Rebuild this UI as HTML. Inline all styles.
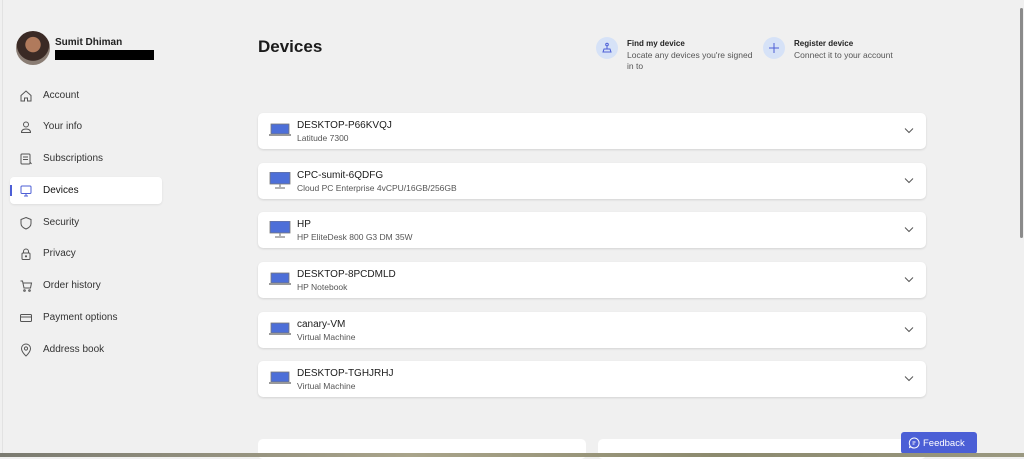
<!DOCTYPE html>
<html><head><meta charset="utf-8"><style>
*{margin:0;padding:0;box-sizing:border-box}
body{width:1024px;height:457px;overflow:hidden;background:#f0f0f0;font-family:"Liberation Sans",sans-serif;color:#1b1b1b;position:relative}
.abs{position:absolute}
.nav{position:absolute;left:0;width:170px;height:28px}
.nav svg{position:absolute;left:19px;top:7px}
.nav span{position:absolute;left:43px;top:8px;font-size:10px;color:#333}
.card{position:absolute;left:258px;width:668px;height:36px;background:#fff;border-radius:5px;box-shadow:0 1px 2px rgba(0,0,0,.12)}
.card .t{position:absolute;left:39px;top:7px;font-size:10px;color:#1b1b1b}
.card .s{position:absolute;left:39px;top:20px;font-size:8.5px;color:#555}
.card .ic{position:absolute;left:11px;top:9px}
.card .ch{position:absolute;right:12px;top:14px}
</style></head><body>
<div class="abs" style="left:2px;top:0;width:1px;height:457px;background:#e2e2e2"></div>
<div class="abs" style="left:16px;top:31px;width:34px;height:34px;border-radius:50%;background:radial-gradient(circle at 50% 40%,#b07a5c 0 28%,#3a2a25 30% 60%,#8a7d74 62%)"></div>
<div class="abs" style="left:55px;top:37px;font-size:10px;font-weight:bold;color:#222">Sumit Dhiman</div>
<div class="abs" style="left:55px;top:50px;width:99px;height:10px;background:#000"></div>

<div class="nav" style="top:82px"><svg width="14" height="14" viewBox="0 0 14 14" fill="none" stroke="#555" stroke-width="1"><path d="M2 6.5L7 2l5 4.5V12H8.5V9h-3v3H2z"/></svg><span>Account</span></div>
<div class="nav" style="top:113px"><svg width="14" height="14" viewBox="0 0 14 14" fill="none" stroke="#555"><circle cx="7" cy="4.5" r="2.5"/><path d="M2.5 12.5c0-2.5 2-3.5 4.5-3.5s4.5 1 4.5 3.5z"/></svg><span>Your info</span></div>
<div class="nav" style="top:145px"><svg width="14" height="14" viewBox="0 0 14 14" fill="none" stroke="#555"><rect x="2" y="2" width="9" height="10" rx="1"/><path d="M4 5h5M4 7.5h5M11 10l1.5 2"/></svg><span>Subscriptions</span></div>
<div class="abs" style="left:10px;top:177px;width:152px;height:27px;background:#fff;border-radius:4px;box-shadow:0 1px 2px rgba(0,0,0,.08)"></div>
<div class="abs" style="left:10px;top:185px;width:2px;height:11px;background:#4d5fd6"></div>
<div class="nav" style="top:177px"><svg width="14" height="14" viewBox="0 0 14 14" fill="none" stroke="#4d5fd6"><rect x="2" y="2" width="10" height="7.5" rx="1"/><path d="M5 12h4M7 9.5V12"/></svg><span style="color:#111">Devices</span></div>
<div class="nav" style="top:209px"><svg width="14" height="14" viewBox="0 0 14 14" fill="none" stroke="#555"><path d="M7 1.5l5 2v4c0 3-2.5 4.5-5 5.5-2.5-1-5-2.5-5-5.5v-4z"/></svg><span>Security</span></div>
<div class="nav" style="top:240px"><svg width="14" height="14" viewBox="0 0 14 14" fill="none" stroke="#555"><rect x="3" y="6" width="8" height="6.5" rx="1"/><path d="M4.5 6V4.5a2.5 2.5 0 015 0V6"/><circle cx="7" cy="9.3" r=".6" fill="#555"/></svg><span>Privacy</span></div>
<div class="nav" style="top:272px"><svg width="14" height="14" viewBox="0 0 14 14" fill="none" stroke="#555"><path d="M1.5 2h2l1.5 7h6.5l1-5H4"/><circle cx="5.5" cy="11.5" r=".8"/><circle cx="10.5" cy="11.5" r=".8"/></svg><span>Order history</span></div>
<div class="nav" style="top:304px"><svg width="14" height="14" viewBox="0 0 14 14" fill="none" stroke="#555"><rect x="1.5" y="3.5" width="11" height="7" rx="1"/><path d="M1.5 6h11"/></svg><span>Payment options</span></div>
<div class="nav" style="top:336px"><svg width="14" height="14" viewBox="0 0 14 14" fill="none" stroke="#555"><path d="M7 13s-4.5-4-4.5-7.5a4.5 4.5 0 019 0C11.5 9 7 13 7 13z"/><circle cx="7" cy="5.5" r="1.6"/></svg><span>Address book</span></div>

<div class="abs" style="left:258px;top:37px;font-size:17px;font-weight:bold;color:#1b1b1b">Devices</div>

<div class="abs" style="left:596px;top:37px;width:22px;height:22px;border-radius:50%;background:#d6e2f7"></div>
<svg class="abs" style="left:601px;top:42px" width="12" height="12" viewBox="0 0 12 12" fill="none" stroke="#4d5fd6"><circle cx="6" cy="2.5" r="1.3"/><path d="M6 4v3M3 7h6l1 3H2z"/></svg>
<div class="abs" style="left:627px;top:39px;font-size:8px;font-weight:bold;color:#222">Find my device</div>
<div class="abs" style="left:627px;top:50px;font-size:8.5px;color:#555;line-height:11px;width:132px">Locate any devices you're signed in to</div>
<div class="abs" style="left:763px;top:37px;width:22px;height:22px;border-radius:50%;background:#d6e2f7"></div>
<svg class="abs" style="left:768px;top:42px" width="12" height="12" viewBox="0 0 12 12" stroke="#4d5fd6"><path d="M6 1v10M1 6h10"/></svg>
<div class="abs" style="left:794px;top:39px;font-size:8px;font-weight:bold;color:#222">Register device</div>
<div class="abs" style="left:794px;top:50px;font-size:8.5px;color:#555">Connect it to your account</div>

<div class="card" style="top:113px"><svg class="ic" width="22" height="16" viewBox="0 0 22 16"><rect x="2" y="2" width="18" height="10" fill="#4d6fd8" stroke="#777" stroke-width=".8"/><rect x="0" y="12" width="22" height="2" fill="#999"/></svg><div class="t">DESKTOP-P66KVQJ</div><div class="s">Latitude 7300</div><svg class="ch" width="10" height="7" viewBox="0 0 10 7" fill="none" stroke="#555"><path d="M1 1.5l4 4 4-4"/></svg></div>
<div class="card" style="top:163px"><svg class="ic" width="22" height="18" viewBox="0 0 22 18"><rect x="1" y="0" width="20" height="12" fill="#4d6fd8" stroke="#777" stroke-width=".8"/><path d="M11 12v3M6 16h10" stroke="#999" stroke-width="1.5"/></svg><div class="t">CPC-sumit-6QDFG</div><div class="s">Cloud PC Enterprise 4vCPU/16GB/256GB</div><svg class="ch" width="10" height="7" viewBox="0 0 10 7" fill="none" stroke="#555"><path d="M1 1.5l4 4 4-4"/></svg></div>
<div class="card" style="top:212px"><svg class="ic" width="22" height="18" viewBox="0 0 22 18"><rect x="1" y="0" width="20" height="12" fill="#4d6fd8" stroke="#777" stroke-width=".8"/><path d="M11 12v3M6 16h10" stroke="#999" stroke-width="1.5"/></svg><div class="t">HP</div><div class="s">HP EliteDesk 800 G3 DM 35W</div><svg class="ch" width="10" height="7" viewBox="0 0 10 7" fill="none" stroke="#555"><path d="M1 1.5l4 4 4-4"/></svg></div>
<div class="card" style="top:262px"><svg class="ic" width="22" height="16" viewBox="0 0 22 16"><rect x="2" y="2" width="18" height="10" fill="#4d6fd8" stroke="#777" stroke-width=".8"/><rect x="0" y="12" width="22" height="2" fill="#999"/></svg><div class="t">DESKTOP-8PCDMLD</div><div class="s">HP Notebook</div><svg class="ch" width="10" height="7" viewBox="0 0 10 7" fill="none" stroke="#555"><path d="M1 1.5l4 4 4-4"/></svg></div>
<div class="card" style="top:312px"><svg class="ic" width="22" height="16" viewBox="0 0 22 16"><rect x="2" y="2" width="18" height="10" fill="#4d6fd8" stroke="#777" stroke-width=".8"/><rect x="0" y="12" width="22" height="2" fill="#999"/></svg><div class="t">canary-VM</div><div class="s">Virtual Machine</div><svg class="ch" width="10" height="7" viewBox="0 0 10 7" fill="none" stroke="#555"><path d="M1 1.5l4 4 4-4"/></svg></div>
<div class="card" style="top:361px"><svg class="ic" width="22" height="16" viewBox="0 0 22 16"><rect x="2" y="2" width="18" height="10" fill="#4d6fd8" stroke="#777" stroke-width=".8"/><rect x="0" y="12" width="22" height="2" fill="#999"/></svg><div class="t">DESKTOP-TGHJRHJ</div><div class="s">Virtual Machine</div><svg class="ch" width="10" height="7" viewBox="0 0 10 7" fill="none" stroke="#555"><path d="M1 1.5l4 4 4-4"/></svg></div>

<div class="abs" style="left:258px;top:439px;width:328px;height:20px;background:#fff;border-radius:5px"></div>
<div class="abs" style="left:598px;top:439px;width:328px;height:20px;background:#fff;border-radius:5px"></div>
<div class="abs" style="left:901px;top:432px;width:76px;height:22px;background:#4b5fd6;border-radius:3px"></div>
<svg class="abs" style="left:908px;top:437px" width="12" height="12" viewBox="0 0 12 12" fill="none" stroke="#fff"><path d="M6 1a5 5 0 11-3.5 8.5L1.5 11l.5-2.5A5 5 0 016 1z"/><path d="M4.5 5h3M4.5 7h2"/></svg>
<div class="abs" style="left:923px;top:438px;font-size:9.5px;color:#fff">Feedback</div>
<div class="abs" style="left:0;top:453px;width:1024px;height:4px;background:linear-gradient(90deg,#7a7a70,#a9a48a 40%,#8c8a6e 70%,#9a9880)"></div>
<div class="abs" style="left:1020px;top:8px;width:3px;height:230px;background:#8a8a8a;border-radius:2px"></div>
</body></html>
